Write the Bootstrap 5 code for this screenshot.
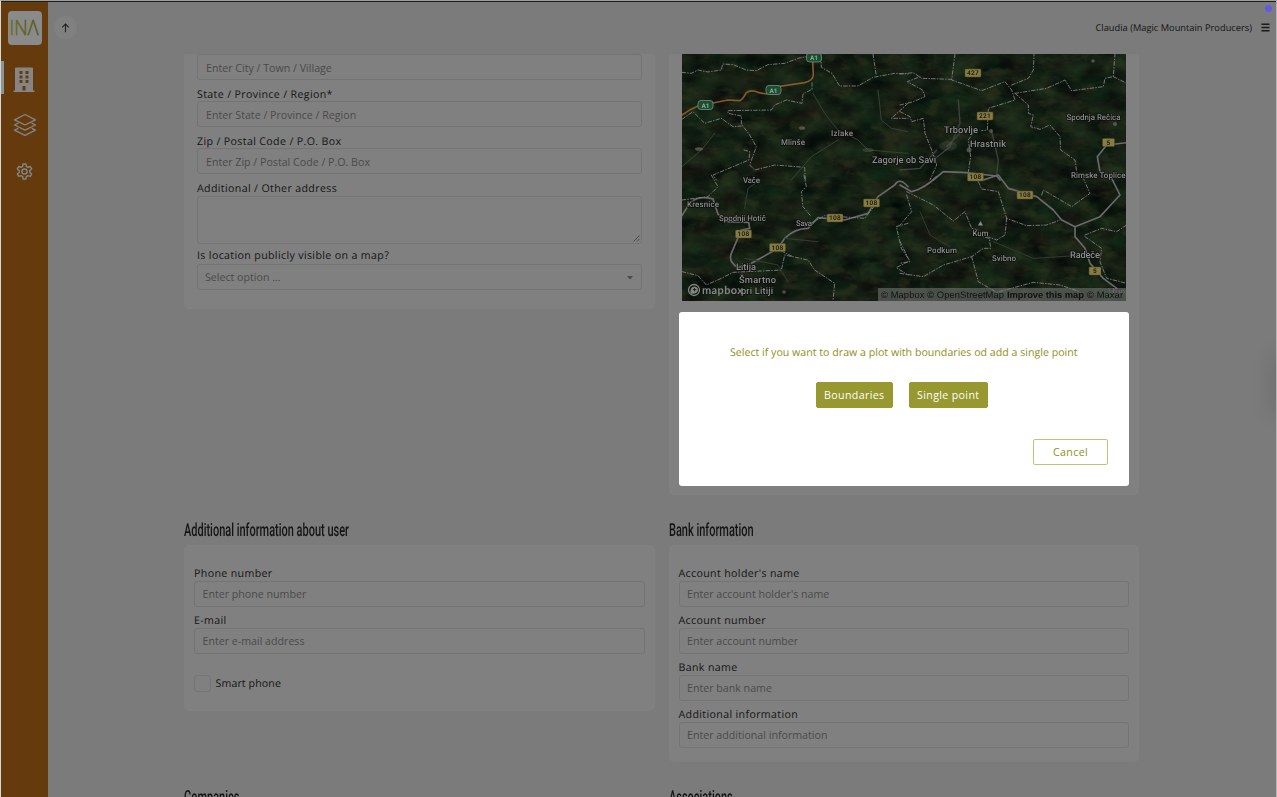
<!DOCTYPE html>
<html lang="en">
<head>
<meta charset="utf-8">
<meta name="viewport" content="width=device-width, initial-scale=1">
<title>INA</title>
<link rel="stylesheet" href="https://cdn.jsdelivr.net/npm/bootstrap@5.3.0/dist/css/bootstrap.min.css">
<style>
  body{font-family:"Open Sans","Noto Sans",sans-serif;font-size:10.65px;line-height:15px;color:#141414;background:#7b7b7b;height:797px;text-rendering:geometricPrecision}
  .frame{height:797px;border-left:1px solid #d8d8d8;border-right:1px solid #b5b5b5;border-top:1px solid #9c9f9c}
  .frame-inner{border-top:1px solid #1b1e1b}
  .side{width:47px;background:#653b0d;padding-top:9px}
  .logo{width:34px;height:34px;background:#8a8a8a;border-radius:4px}
  .side-item{height:47px;width:47px}
  .side-item.current{border-left:3px solid #8d9496;border-radius:0 2px 2px 0;padding-right:4px;height:33px;margin:7px 0}
  .topbar{height:52px;padding:0 6px 1px 6px}
  .up{width:23px;height:23px;background:#808080}
  .user{font-size:9.3px}
  .dot{width:7px;height:7px;background:#5e5ce6;top:4px;right:4px}
  .content-col{width:955px;margin-left:136px;gap:14px}
  .panel{width:470.5px;background:#808080;border-radius:5px}
  .panel-flat{border-radius:0 0 5px 5px}
  .pad-a{padding:0 13px 19px 13px}
  .pad-b{padding:20px 10px 14px 10px}
  .lbl{display:block;height:21px;padding-top:8px;line-height:15px;letter-spacing:.35px}
  .pad-b .lbl{padding-top:7px}
  .lbl-b{height:21.4px}
  .field{display:flex;align-items:center;width:100%;height:26px;border:1px solid #747474;border-radius:3px;background:transparent;padding:1px 8px 0 8px;font-size:10.65px;color:#4a4a4a;letter-spacing:0}
  .pad-b .field{padding:0 8px 1px 7.5px}
  input.field::placeholder{color:#4a4a4a;opacity:1}
  .area{height:48px}
  .title{font-family:Roboto,sans-serif;font-size:18px;font-weight:500;line-height:20px;transform-origin:0 50%;transform:scaleX(.61);white-space:nowrap;width:max-content;position:relative;top:1px}
  .tick{width:17px;height:17px;border:1px solid #747474;border-radius:3px}
  .map{display:block;width:444px;height:247px;margin:0 auto}
  .dialog-box{height:174px;margin-top:11px;background:#fff;border-radius:3px;color:#8f9022;padding-top:34px}
  .dialog-box .btn{--bs-btn-font-size:10.65px;--bs-btn-line-height:15px;--bs-btn-border-radius:2px;padding:4.5px 0;letter-spacing:.35px;font-weight:500}
  .btn-olive,.btn-olive:hover{background:#97982f;color:#fff;border-color:#97982f}
  .btn-line{background:#fff;border-color:#c0c17c;color:#8f9022}
  .edge{width:8px;height:54px;top:357px;right:-8px;box-shadow:0 0 22px 3px rgba(0,0,0,.14)}
</style>
</head>
<body class="overflow-hidden">
<div class="frame overflow-hidden position-relative">
<div class="frame-inner d-flex h-100">
  <nav class="side d-flex flex-column align-items-center flex-shrink-0 h-100">
    <div class="logo">
      <svg width="34" height="34"><defs><linearGradient id="lg"><stop offset="0" stop-color="#6b6c20"/><stop offset="1" stop-color="#55570e"/></linearGradient></defs><text x="1.500" y="24" font-size="21" font-weight="300" textLength="29" lengthAdjust="spacingAndGlyphs" fill="url(#lg)" stroke="url(#lg)" stroke-width=".5" font-family="Open Sans">INΛ</text></svg>
    </div>
    <a class="side-item current d-flex align-items-center justify-content-center mt-3">
      <svg class="mt-1" width="22" height="26" viewBox="0 0 22 26"><path fill="#858585" fill-rule="evenodd" d="M2 1.500Q2 .5 3 .5h16q1 0 1 1V23.500h1.500V25H.5v-1.500H2zM6.500 4v3h3V4zm6 0v3h3V4zm-6 4.500v3h3v-3zm6 0v3h3v-3zm-6 4.500v3h3v-3zm6 0v3h3v-3zM9.500 19v4.500h3V19z"/></svg>
    </a>
    <a class="side-item d-flex align-items-center justify-content-center">
      <svg width="24" height="24" viewBox="0 0 24 24" fill="none" stroke="#858585" stroke-width="1.300" stroke-linejoin="round"><path d="M12 1.500 22.500 6.800 12 12 1.500 6.800z"/><path d="M5.300 10.100 1.500 12 12 17.200 22.500 12l-3.800-1.900M5.300 15.300 1.500 17.200 12 22.400l10.500-5.200-3.800-1.900"/></svg>
    </a>
    <a class="side-item d-flex align-items-center justify-content-center">
      <svg width="17" height="17" viewBox="0 0 24 24" fill="none" stroke="#858585" stroke-width="2"><path stroke-linejoin="round" d="M10 1.500h4l.6 3.300 2.300 1.300 3.200-1.200 2 3.500-2.600 2.100v2.900l2.600 2.100-2 3.500-3.200-1.200-2.300 1.300-.6 3.400h-4l-.6-3.400-2.300-1.300L3.900 19l-2-3.500 2.600-2.100v-2.900L1.900 8.400l2-3.500 3.200 1.200 2.300-1.300z"/><circle cx="12" cy="12" r="3.600"/></svg>
    </a>
  </nav>
  <div class="flex-grow-1">
    <header class="topbar d-flex align-items-center justify-content-between">
      <span class="up rounded-circle d-flex align-items-center justify-content-center">
        <svg width="9" height="10" viewBox="0 0 9 10" fill="none" stroke="#222" stroke-width="1.100"><path d="M4.500 9.300V1M1.200 4.300 4.500 1l3.300 3.300"/></svg>
      </span>
      <span class="d-flex align-items-center user">Claudia (Magic Mountain Producers)
        <svg style="margin-left:9px" width="9" height="9" viewBox="0 0 9 9" stroke="#1a1a1a" stroke-width="1.400"><path d="M.5 1.200h8M.5 4.500h8M.5 7.800h8"/></svg></span>
    </header>
    <main>
      <div class="content-col d-flex align-items-start">
        <section class="panel panel-flat pad-a">
          <input class="field" placeholder="Enter City / Town / Village">
          <label class="lbl">State / Province / Region*</label>
          <input class="field" placeholder="Enter State / Province / Region">
          <label class="lbl lbl-b">Zip / Postal Code / P.O. Box</label>
          <input class="field" placeholder="Enter Zip / Postal Code / P.O. Box">
          <label class="lbl lbl-b">Additional / Other address</label>
          <div class="field area align-items-end justify-content-end p-0"><svg width="9" height="9" stroke="#444" stroke-width=".9"><path d="M1.500 7.500l6-6M5 7.500 7.500 5"/></svg></div>
          <label class="lbl" style="height:20.4px;padding-top:5px">Is location publicly visible on a map?</label>
          <div class="field justify-content-between" style="padding:2px 8px 0 7px"><span>Select option ...</span><svg width="6" height="4"><path d="M0 0h6L3 3.500z" fill="#4c4c4c"/></svg></div>
        </section>
        <section class="panel panel-flat" style="padding:0 10px 9px">
          <svg class="map" viewBox="682 54 444 247" font-family="Roboto, sans-serif">
            <defs>
              <filter id="land" x="0" y="0" width="100%" height="100%" color-interpolation-filters="sRGB"><feTurbulence type="fractalNoise" baseFrequency=".035 .055" numOctaves="6" seed="8"/><feColorMatrix values=".14 .06 0 0 -.026  .11 .17 0 0 -.024  .07 .08 0 0 -.004  0 0 0 0 1"/></filter>
              <filter id="fields" x="0" y="0" width="100%" height="100%" color-interpolation-filters="sRGB"><feTurbulence type="fractalNoise" baseFrequency=".05 .09" numOctaves="6" seed="31"/><feColorMatrix values="0 0 0 0 .18  0 0 0 0 .2  0 0 0 0 .12  5 0 0 0 -2.600"/></filter>
            </defs>
            <rect x="682" y="54" width="444" height="247" fill="#101a10"/>
            <rect x="682" y="54" width="444" height="247" filter="url(#land)"/>
            <rect x="682" y="54" width="444" height="247" filter="url(#fields)" opacity=".5"/>
            <g fill="none" stroke-linejoin="round" stroke-linecap="round">
              <g transform="translate(678 50) scale(.33333)">
                <path stroke="#8a552c" stroke-width="5" d="M12 195Q35 178 60 168L150 150 185 152Q195 148 205 128 220 118 240 127L265 132 300 110 380 98Q405 92 406 75L403 12"/>
                <g stroke="#7c7c7c" stroke-width="2.800" stroke-dasharray="11 6 2 6">
                  <path d="M12 67 40 70 60 60 90 66 130 60 134 42 165 44 205 60 235 62 270 44 320 40 360 25 385 20"/>
                  <path d="M428 20 430 52 462 70 485 108 540 108 585 82 650 70 690 72M585 12 595 78"/>
                  <path d="M402 98 402 118 375 132 372 160 325 150 290 165 280 180 150 182 150 190 190 198 190 222 215 255 235 290 215 345 230 360 290 345 380 352 382 390M12 208 45 185 80 220 130 205 165 230 190 228M198 300 215 305 213 330 105 375 115 390M690 160 640 205 690 205"/>
                </g>
                <path stroke="#383f35" stroke-width="3" d="M405 130 440 190 480 240 540 270 570 300 690 310M600 120 610 210 640 235 690 245M12 350 70 300 110 250M340 390 400 320 480 270"/>
              </g>
              <g transform="translate(900 50) scale(.33333)">
                <g stroke="#7c7c7c" stroke-width="2.800" stroke-dasharray="11 6 2 6">
                  <path d="M165 12 155 90 245 122 315 95 335 120 345 150 265 175 262 240 245 242M0 72 40 68 65 85 155 88M0 165 40 155 75 140 68 120 22 95 60 80M335 105 385 85 400 60 402 12M345 130 440 115 495 90 515 122 610 110 615 85 640 80 645 12M345 130 385 165 385 190 400 195 392 230 420 238 450 225 480 260 482 300 525 330 530 365M0 185 30 200 35 215 70 205 75 250 95 300 110 345 90 390M225 240 205 270 212 320 205 365M640 80 680 100"/>
                </g>
                <path stroke="#6a6a6a" stroke-width="5" d="M100 390 130 365 200 368 290 378 300 390M600 365 592 320 620 285 680 278"/>
                <path stroke="#3d433a" stroke-width="4" d="M275 245 295 330 290 375M175 150 180 220 150 290 100 330M180 250 140 290M0 360 60 355 110 300"/>
              </g>
              <g transform="translate(678 175) scale(.33333)">
                <path stroke="#696969" stroke-width="5" d="M690 35Q665 5 650 30L600 65 570 115 500 135 420 128 390 160Q350 160 320 190L300 220 215 268 180 278Q150 260 160 235L190 165 215 160 212 142 150 140 120 118 105 72Q60 60 35 85L12 122"/>
                <g stroke="#7c7c7c" stroke-width="2.800" stroke-dasharray="11 6 2 6">
                  <path d="M378 0 385 35 370 50 375 95 400 125M100 0 120 35 90 65 12 75M12 290 60 302 85 330 130 310 165 292 250 288 310 285 320 240 390 255 410 285 470 325 465 378M310 228 345 245M690 145 655 155 670 220 690 250M690 260 655 278 690 300M380 155 440 122 560 130 600 80"/>
                </g>
                <path stroke="#363b32" stroke-width="3" d="M200 100 210 40 240 20M320 190 420 200M200 250 300 270 330 320"/>
              </g>
              <g transform="translate(900 175) scale(.33333)">
                <path stroke="#6a6a6a" stroke-width="5" d="M0 30 35 50Q75 40 110 5M250 15 295 0 325 40 410 65 460 105 485 135 525 155 525 185 555 220 570 265 610 310 650 340M525 155 600 125 660 60 630 0"/>
                <g stroke="#7c7c7c" stroke-width="2.800" stroke-dasharray="11 6 2 6">
                  <path d="M235 20 245 42 295 50 320 130 380 152 440 150 480 135M20 50 100 90 160 138 195 110 215 160 235 165M320 130 315 180 290 195 250 180M20 60 35 110 0 150M0 200 30 260 0 265M0 295 70 305 130 270 215 245 250 220 272 220 268 190 230 180M215 245 235 320 290 352 400 322 480 330 540 350M425 60 430 45 515 95 570 55 550 10M555 180 605 160 650 170 680 150M555 185 605 220 600 260 620 310 680 325"/>
                </g>
                <path stroke="#343a31" stroke-width="3" d="M60 110 90 180 150 215M280 200 400 250 560 240"/>
              </g>
            </g>
            <g fill="#6c6c60" opacity=".7"><ellipse cx="802" cy="128" rx="3" ry="1.800"/><ellipse cx="699" cy="149" rx="4" ry="1.800"/><circle cx="991" cy="131" r="2"/><ellipse cx="868" cy="150" rx="6" ry="2" opacity=".5"/><ellipse cx="948" cy="146" rx="9" ry="5" opacity=".3"/><circle cx="969" cy="150" r="2.500"/><circle cx="784" cy="292" r="1.800"/><circle cx="1115" cy="124" r="2"/><circle cx="1093" cy="61" r="1.800"/></g>
            <g text-anchor="middle" font-size="6.500" font-weight="700">
              <g fill="#194f31" stroke="#7e8d82" stroke-width=".8"><rect x="698" y="100.500" width="15" height="9" rx="3"/><rect x="766" y="85.500" width="15" height="9" rx="3"/><rect x="806.500" y="53" width="15" height="9" rx="3"/></g>
              <g fill="#98a49b"><text x="705.500" y="107.500">A1</text><text x="773.500" y="92.500">A1</text><text x="814" y="60">A1</text></g>
              <g fill="#857b43" stroke="#4e4a2b" stroke-width=".5"><rect x="965" y="69" width="16" height="8" rx="1"/><rect x="977" y="112" width="16" height="8" rx="1"/><rect x="1102.500" y="138.500" width="12" height="8" rx="1"/><rect x="967.500" y="173" width="16" height="8" rx="1"/><rect x="1017" y="191" width="16" height="8" rx="1"/><rect x="863.500" y="199" width="16" height="8" rx="1"/><rect x="827" y="214" width="16" height="8" rx="1"/><rect x="735.500" y="230" width="16" height="8" rx="1"/><rect x="769.500" y="243.500" width="16" height="8" rx="1"/><rect x="1089" y="267" width="12" height="8" rx="1"/></g>
              <g fill="#25230f" letter-spacing=".3"><text x="973" y="75.300">427</text><text x="985" y="118.300">221</text><text x="1108.500" y="144.800">5</text><text x="975.500" y="179.300">108</text><text x="1025" y="197.300">108</text><text x="871.500" y="205.300">108</text><text x="835" y="220.300">108</text><text x="743.500" y="236.300">108</text><text x="777.500" y="249.800">108</text><text x="1095" y="273.300">5</text></g>
            </g>
            <g fill="#8c8c8c" stroke="#0b100b" stroke-width="1.400" paint-order="stroke" font-size="8" font-weight="500">
              <text x="781" y="144.500" textLength="24">Mlinše</text><text x="831" y="135.500" textLength="22">Izlake</text>
              <text x="872" y="163" font-size="9.300" textLength="64">Zagorje ob Savi</text>
              <text x="944" y="132.500" font-size="9.300" textLength="34">Trbovlje</text><text x="970" y="147" font-size="9.300" textLength="36">Hrastnik</text>
              <text x="1066.500" y="119.500" textLength="54">Spodnja Rečica</text><text x="1071" y="177.500" textLength="54.500">Rimske Toplice</text>
              <text x="743" y="183" textLength="17">Vače</text><text x="687" y="206.500" textLength="32">Kresnice</text><text x="719" y="220.500" textLength="47">Spodnji Hotič</text>
              <text x="796" y="226" textLength="16">Sava</text><text x="736" y="270" font-size="9.300" textLength="20">Litija</text>
              <text x="739" y="283" font-size="9.300" textLength="37">Šmartno</text><text x="741" y="294" font-size="9.300" textLength="32">pri Litiji</text>
              <text x="972.500" y="235.500" textLength="16">Kum</text><text x="927" y="252.500" textLength="30">Podkum</text><text x="992" y="260.500" textLength="24">Svibno</text>
              <text x="1070" y="258" font-size="9.300" textLength="30">Radeče</text><text x="1108" y="293.500" textLength="17" fill="#555">Vrhovo</text>
            </g>
            <path d="M978 225.500 980.500 221l2.500 4.500z" fill="#8a8a8a"/>
            <g><circle cx="694" cy="290" r="5.500" fill="none" stroke="#858585" stroke-width="1.300"/><path fill="#858585" d="M690.500 293.500q-.5-6.500 3.500-7 4 0 4 3.500-.5 4.500-7.500 3.500z"/><path d="M694.500 287.500l.7 1.500 1.500.6-1.500.7-.7 1.400-.7-1.400-1.400-.7 1.400-.6z" fill="#1a211a"/><text x="702" y="293.500" font-family="Lato" font-weight="700" font-size="11" fill="#858585" textLength="41">mapbox</text></g>
            <rect x="878" y="288" width="248" height="13" fill="#808080" opacity=".52"/>
            <g font-family="Liberation Sans" font-size="9.400" fill="#0f120f"><text x="881" y="298" textLength="123">© Mapbox © OpenStreetMap</text><text x="1007" y="298" font-weight="700" textLength="77">Improve this map</text><text x="1087" y="298" textLength="36">© Maxar</text></g>
          </svg>
          <div class="dialog-box" role="dialog">
            <div class="text-center">Select if you want to draw a plot with boundaries od add a single point</div>
            <div class="d-flex justify-content-center gap-3" style="margin:21px 4px 31px 0">
              <button class="btn btn-olive" style="width:77px">Boundaries</button>
              <button class="btn btn-olive" style="width:79px">Single point</button>
            </div>
            <div class="d-flex justify-content-end" style="padding-right:21px"><button class="btn btn-line" style="width:75px">Cancel</button></div>
          </div>
        </section>
      </div>
      <div class="content-col d-flex align-items-start" style="padding-top:25px">
        <div>
          <h2 class="title m-0">Additional information about user</h2>
          <section class="panel pad-b" style="margin-top:5px;padding-bottom:19px;padding-top:15px">
            <label class="lbl">Phone number</label><input class="field" placeholder="Enter phone number">
            <label class="lbl">E-mail</label><input class="field" placeholder="Enter e-mail address">
            <div class="d-flex align-items-center" style="margin-top:21px;gap:4.5px;letter-spacing:.1px"><span class="tick"></span><span style="padding-top:2px">Smart phone</span></div>
          </section>
        </div>
        <div>
          <h2 class="title m-0">Bank information</h2>
          <section class="panel pad-b" style="margin-top:5px;padding-top:15px">
            <label class="lbl">Account holder's name</label><input class="field" placeholder="Enter account holder's name">
            <label class="lbl">Account number</label><input class="field" placeholder="Enter account number">
            <label class="lbl lbl-b">Bank name</label><input class="field" placeholder="Enter bank name">
            <label class="lbl">Additional information</label><input class="field" placeholder="Enter additional information">
          </section>
        </div>
      </div>
      <div class="content-col d-flex" style="padding-top:25px">
        <div style="width:470.5px"><h2 class="title m-0">Companies</h2></div>
        <div><h2 class="title m-0">Associations</h2></div>
      </div>
    </main>
  </div>
</div>
<span class="dot rounded-circle position-absolute"></span>
<span class="edge position-absolute"></span>
</div>
<script src="https://cdn.jsdelivr.net/npm/bootstrap@5.3.0/dist/js/bootstrap.bundle.min.js"></script>
</body>
</html>
